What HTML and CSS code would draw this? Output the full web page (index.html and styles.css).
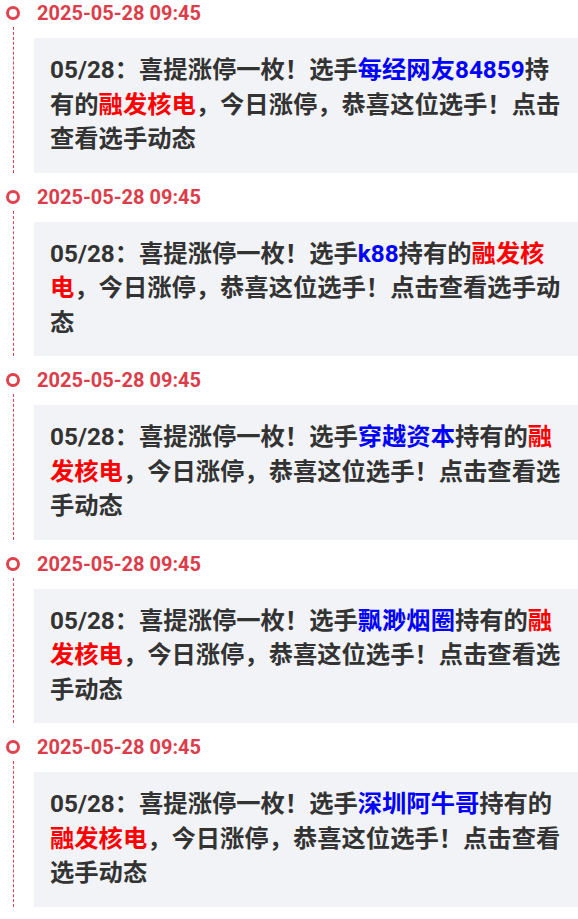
FILE: index.html
```html
<!DOCTYPE html>
<html lang="zh-CN">
<head>
    <meta charset="UTF-8">
    <meta name="viewport" content="width=device-width, initial-scale=1.0">
    <title>选手动态</title>
    <link rel="stylesheet" href="styles.css">
</head>
<body>
    <ul class="timeline">
        <li class="item">
            <div class="axis"><span class="dot"></span><span class="line"></span></div>
            <div class="main">
                <div class="time">2025-05-28 09:45</div>
                <div class="card">05/28：喜提涨停一枚！选手<span class="user">每经网友84859</span>持有的<span class="stock">融发核电</span>，今日涨停，恭喜这位选手！点击查看选手动态</div>
            </div>
        </li>
        <li class="item">
            <div class="axis"><span class="dot"></span><span class="line"></span></div>
            <div class="main">
                <div class="time">2025-05-28 09:45</div>
                <div class="card">05/28：喜提涨停一枚！选手<span class="user">k88</span>持有的<span class="stock">融发核电</span>，今日涨停，恭喜这位选手！点击查看选手动态</div>
            </div>
        </li>
        <li class="item">
            <div class="axis"><span class="dot"></span><span class="line"></span></div>
            <div class="main">
                <div class="time">2025-05-28 09:45</div>
                <div class="card">05/28：喜提涨停一枚！选手<span class="user">穿越资本</span>持有的<span class="stock">融发核电</span>，今日涨停，恭喜这位选手！点击查看选手动态</div>
            </div>
        </li>
        <li class="item">
            <div class="axis"><span class="dot"></span><span class="line"></span></div>
            <div class="main">
                <div class="time">2025-05-28 09:45</div>
                <div class="card">05/28：喜提涨停一枚！选手<span class="user">飘渺烟圈</span>持有的<span class="stock">融发核电</span>，今日涨停，恭喜这位选手！点击查看选手动态</div>
            </div>
        </li>
        <li class="item">
            <div class="axis"><span class="dot"></span><span class="line"></span></div>
            <div class="main">
                <div class="time">2025-05-28 09:45</div>
                <div class="card">05/28：喜提涨停一枚！选手<span class="user">深圳阿牛哥</span>持有的<span class="stock">融发核电</span>，今日涨停，恭喜这位选手！点击查看选手动态</div>
            </div>
        </li>
    </ul>
</body>
</html>
```

FILE: styles.css
```css
* {
    margin: 0;
    padding: 0;
    box-sizing: border-box;
}
body {
    background: #fff;
    font-family: Roboto, "Noto Sans CJK SC", sans-serif;
}
ul {
    list-style: none;
}
.timeline .item {
    display: flex;
    margin-bottom: 11px;
}
.timeline .axis {
    width: 26px;
    display: flex;
    flex-direction: column;
    align-items: center;
}
.timeline .dot {
    width: 14px;
    height: 14px;
    margin-top: 6px;
    border: 3px solid #e0434f;
    border-radius: 50%;
}
.timeline .line {
    flex: 1;
    margin-top: 7px;
    border-left: 1px dashed #e0434f;
}
.timeline .main {
    flex: 1;
    margin-left: 8px;
}
.timeline .time {
    height: 26px;
    line-height: 26px;
    padding-left: 3px;
    font-size: 20px;
    font-weight: bold;
    color: #dc3d4a;
}
.timeline .card {
    margin-top: 12px;
    padding: 15px 12px 16px 16px;
    background-color: #f2f3f7;
    font-size: 24.3px;
    line-height: 34.5px;
    font-weight: bold;
    color: #333;
}
.card .user {
    color: #0000ff;
}
.card .stock {
    color: #ff0000;
}
```
